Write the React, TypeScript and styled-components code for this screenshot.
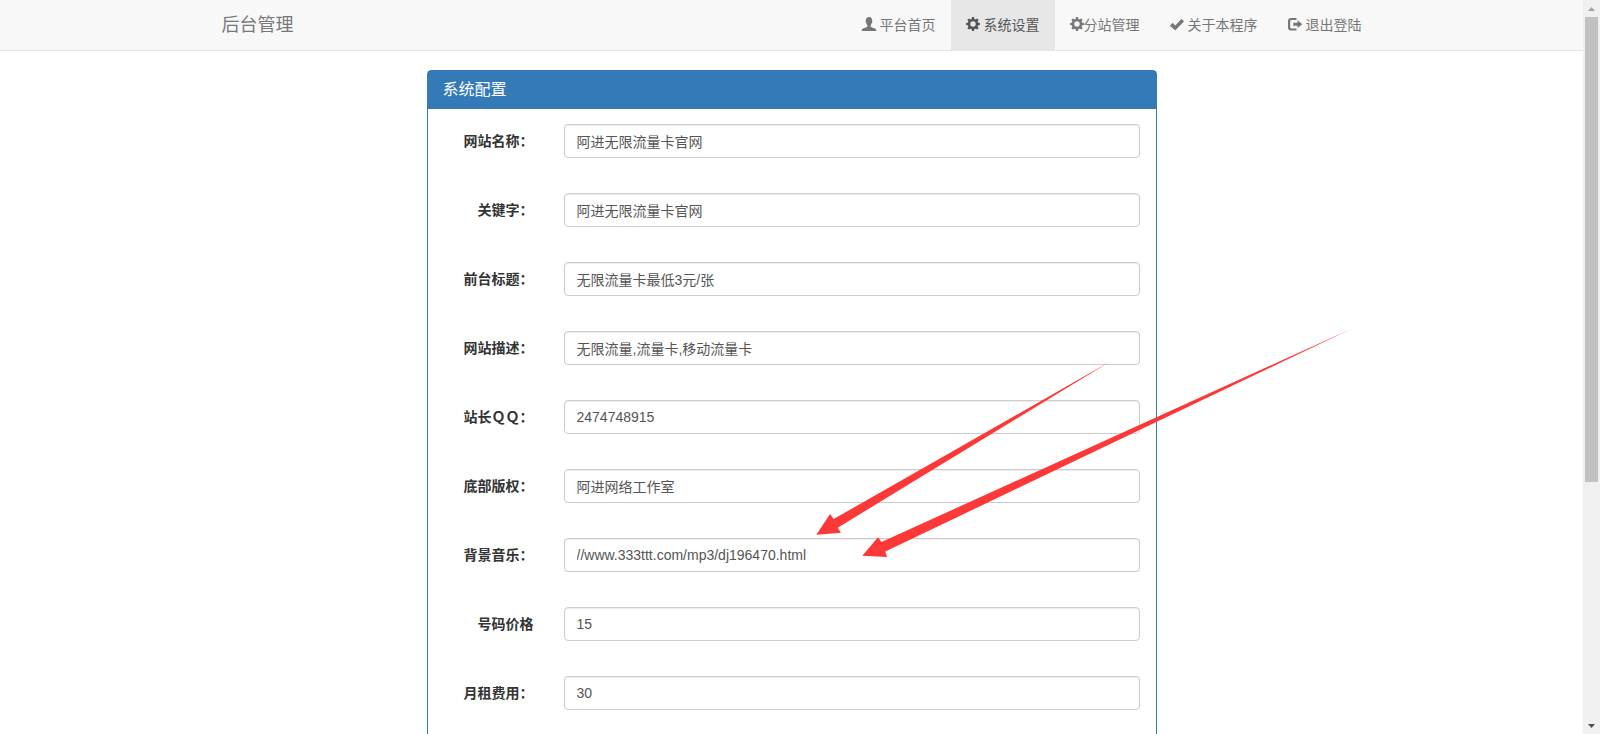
import React from "react";
import styled, { createGlobalStyle } from "styled-components";

const GlobalStyle = createGlobalStyle`
  *, *::before, *::after {
    box-sizing: border-box;
  }

  body {
    margin: 0;
    background: #fff;
    color: #333;
    font-family: "Liberation Sans", Arial, "Noto Sans CJK SC", sans-serif;
    font-size: 14px;
    line-height: 20px;
  }
`;

const Shell = styled.div`
  display: grid;
  grid-template-columns: minmax(0, 1fr) 17px;
  height: 100vh;
  overflow: hidden;
`;

const Page = styled.div`
  overflow: hidden;
`;

const Navbar = styled.header`
  background: #f8f8f8;
  border-bottom: 1px solid #e7e7e7;
`;

const NavInner = styled.div`
  display: flex;
  justify-content: space-between;
  max-width: 1170px;
  margin: 0 auto;
`;

const Brand = styled.a`
  padding: 15px;
  color: #777;
  font-size: 18px;
  line-height: 20px;
  text-decoration: none;
`;

const NavList = styled.ul`
  display: flex;
  margin: 0;
  padding: 0;
  list-style: none;
`;

const NavLink = styled.a<{ $active?: boolean; $tight?: boolean }>`
  display: flex;
  align-items: center;
  gap: ${(p) => (p.$tight ? 0 : 4)}px;
  padding: 15px;
  background: ${(p) => (p.$active ? "#e7e7e7" : "transparent")};
  color: ${(p) => (p.$active ? "#555" : "#777")};
  text-decoration: none;
  white-space: nowrap;
`;

const Icon = styled.svg`
  width: 14px;
  height: 14px;
  margin-bottom: 2px;
  overflow: visible;
  fill: currentColor;
  flex: none;
`;

const Content = styled.main`
  max-width: 760px;
  margin: 0 auto;
  padding: 19px 15px 0;
`;

const Panel = styled.section`
  position: relative;
  border: 1px solid #337ab7;
  border-radius: 4px;
  box-shadow: 0 1px 1px rgba(0, 0, 0, 0.05);
`;

const PanelTitle = styled.h3`
  margin: 0;
  padding: 10px 15px;
  background: #337ab7;
  color: #fff;
  font-size: 16px;
  font-weight: 400;
  line-height: 18px;
`;

const Form = styled.form`
  padding: 15px 16px 0 15px;
`;

const Field = styled.div`
  display: grid;
  grid-template-columns: 91px minmax(0, 1fr);
  column-gap: 30px;
  margin-bottom: 35px;
`;

const Label = styled.label`
  padding-top: 7px;
  font-weight: 700;
  text-align: right;
  white-space: nowrap;
`;

const Input = styled.input`
  width: 100%;
  height: 34px;
  padding: 6px 12px;
  border: 1px solid #ccc;
  border-radius: 4px;
  background: #fff;
  box-shadow: inset 0 1px 1px rgba(0, 0, 0, 0.075);
  color: #555;
  font: inherit;
`;

const Arrows = styled.svg`
  position: absolute;
  top: 249px;
  left: 379px;
  width: 560px;
  height: 250px;
  fill: #fd3838;
  pointer-events: none;
`;

const Scrollbar = styled.aside`
  display: flex;
  flex-direction: column;
  background: #f0f0f0;
`;

const ScrollButton = styled.button<{ $muted?: boolean }>`
  display: flex;
  align-items: center;
  justify-content: center;
  height: 17px;
  padding: 0;
  border: 0;
  background: none;
  color: ${(p) => (p.$muted ? "#a3a3a3" : "#505050")};
`;

const ScrollGlyph = styled.svg`
  width: 7px;
  height: 4px;
  fill: currentColor;
`;

const ScrollTrack = styled.div`
  flex: 1;
  padding: 0 2px;
`;

const ScrollThumb = styled.div`
  height: 66.4%;
  background: #c1c1c1;
`;

function UserIcon() {
  return (
    <Icon viewBox="0 0 14 14" aria-hidden="true">
      <path d="M7 0C4.800 0 3.800 1.500 3.900 3.600c-.3.1-.4.6-.2 1.500.2.800.5 1.200.8 1.300.2.900.5 1.500.9 2v1.400C4.400 10.700.1 11-.3 13.200V14h14.600v-.8C13.900 11 9.600 10.700 8.600 9.800V8.400c.4-.5.7-1.100.9-2 .3-.1.6-.5.8-1.300.2-.9.1-1.400-.2-1.500C10.200 1.500 9.200 0 7 0z" />
    </Icon>
  );
}

function CogIcon() {
  return (
    <Icon viewBox="0 0 14 14" aria-hidden="true">
      <path
        fillRule="evenodd"
        d="M7 1.800a5.200 5.200 0 1 0 0 10.400a5.200 5.200 0 1 0 0-10.400zM7 4.300a2.700 2.700 0 1 1 0 5.400a2.700 2.700 0 1 1 0-5.400z"
      />
      {[0, 45, 90, 135, 180, 225, 270, 315].map((angle) => (
        <path key={angle} d="M5.500 2.600L6 .1h2l.5 2.500z" transform={`rotate(${angle} 7 7)`} />
      ))}
    </Icon>
  );
}

function CheckIcon() {
  return (
    <Icon viewBox="0 0 14 14" aria-hidden="true">
      <path d="M.2 8.300L2.300 6.200q.4-.4.8 0L5.300 8.400 11.200 2.300q.4-.4.800 0l1.700 1.700q.4.4 0 .8L5.700 13q-.4.400-.8 0L.2 8.900q-.2-.3 0-.6z" />
    </Icon>
  );
}

function LogoutIcon() {
  return (
    <Icon viewBox="0 0 14 14" aria-hidden="true">
      <path d="M8.500 1H3.200Q0 1 0 4v6.500q0 3 3.200 3h5.300v-2.100H3.400q-1.200 0-1.200-1.100V4.300q0-1.200 1.200-1.200h5.100z" />
      <path d="M9.600 3.300l4.700 3.900-4.700 3.900V8.800H5.300V5.700h4.300z" />
    </Icon>
  );
}

const navItems = [
  { text: "平台首页", icon: UserIcon },
  { text: "系统设置", icon: CogIcon, active: true },
  { text: "分站管理", icon: CogIcon, tight: true },
  { text: "关于本程序", icon: CheckIcon },
  { text: "退出登陆", icon: LogoutIcon },
];

const fields = [
  { id: "sitename", label: "网站名称：", value: "阿进无限流量卡官网" },
  { id: "keywords", label: "关键字：", value: "阿进无限流量卡官网" },
  { id: "title", label: "前台标题：", value: "无限流量卡最低3元/张" },
  { id: "description", label: "网站描述：", value: "无限流量,流量卡,移动流量卡" },
  { id: "qq", label: "站长ＱＱ：", value: "2474748915" },
  { id: "copyright", label: "底部版权：", value: "阿进网络工作室" },
  { id: "music", label: "背景音乐：", value: "//www.333ttt.com/mp3/dj196470.html" },
  { id: "price", label: "号码价格", value: "15" },
  { id: "rent", label: "月租费用：", value: "30" },
];

export default function App() {
  return (
    <>
      <GlobalStyle />
      <Shell>
        <Page>
          <Navbar>
            <NavInner>
              <Brand href="#">后台管理</Brand>
              <nav>
                <NavList>
                  {navItems.map(({ text, icon: Glyph, active, tight }) => (
                    <li key={text}>
                      <NavLink href="#" $active={active} $tight={tight}>
                        <Glyph />
                        <span>{text}</span>
                      </NavLink>
                    </li>
                  ))}
                </NavList>
              </nav>
            </NavInner>
          </Navbar>
          <Content>
            <Panel>
              <PanelTitle>系统配置</PanelTitle>
              <Form>
                {fields.map((f) => (
                  <Field key={f.id}>
                    <Label htmlFor={f.id}>{f.label}</Label>
                    <Input id={f.id} type="text" defaultValue={f.value} />
                  </Field>
                ))}
              </Form>
              <Arrows viewBox="0 0 560 250" aria-hidden="true">
                <path d="M9.300 214.700L23 194l3.700 5L304 41 30.700 207.700l3.300 5z" />
                <path d="M55.300 235.700L71 217.300l3.500 4.700L545 8.500 78.300 231.500 80 237z" />
              </Arrows>
            </Panel>
          </Content>
        </Page>
        <Scrollbar aria-hidden="true">
          <ScrollButton type="button" tabIndex={-1} $muted>
            <ScrollGlyph viewBox="0 0 7 4">
              <path d="M0 4L3.500 0 7 4z" />
            </ScrollGlyph>
          </ScrollButton>
          <ScrollTrack>
            <ScrollThumb />
          </ScrollTrack>
          <ScrollButton type="button" tabIndex={-1}>
            <ScrollGlyph viewBox="0 0 7 4">
              <path d="M0 0h7L3.500 4z" />
            </ScrollGlyph>
          </ScrollButton>
        </Scrollbar>
      </Shell>
    </>
  );
}
